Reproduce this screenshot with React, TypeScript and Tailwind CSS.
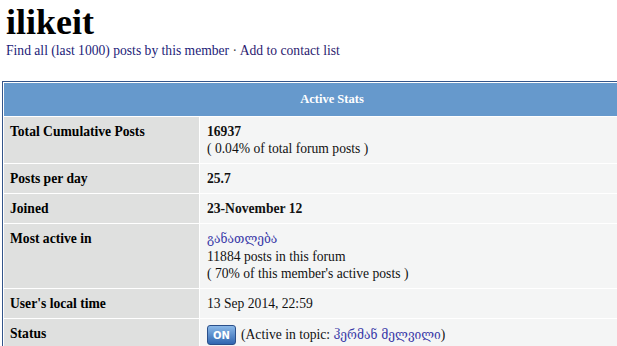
const serif = "font-['Liberation_Serif','DejaVu_Serif','DejaVu_Sans',serif]";
const geo = "text-[12px] font-['DejaVu_Serif','DejaVu_Sans',serif]";

type Row = { label: string; value: React.ReactNode };

const rows: Row[] = [
  {
    label: 'Total Cumulative Posts',
    value: (
      <>
        <div className="font-bold">16937</div>
        <div>( 0.04% of total forum posts )</div>
      </>
    ),
  },
  { label: 'Posts per day', value: <div className="font-bold">25.7</div> },
  { label: 'Joined', value: <div className="font-bold">23-November 12</div> },
  {
    label: 'Most active in',
    value: (
      <>
        <div>
          <a className={`text-[#3a3aa8] ${geo}`} href="#">
            განათლება
          </a>
        </div>
        <div>11884 posts in this forum</div>
        <div>( 70% of this member's active posts )</div>
      </>
    ),
  },
  { label: "User's local time", value: <div>13 Sep 2014, 22:59</div> },
  {
    label: 'Status',
    value: (
      <div className="flex items-center">
        <span className="inline-flex h-[20px] w-[29px] items-center justify-center rounded-[3px] border border-[#2a4f8a] bg-gradient-to-b from-[#8ab8e8] to-[#2f66b0] font-['DejaVu_Sans',sans-serif] text-[10px] font-bold text-white">
          ON
        </span>
        <span className="ml-[5px]">
          (Active in topic:{' '}
          <a className={`text-[#3a3aa8] ${geo}`} href="#">
            ჰერმან მელვილი
          </a>
          )
        </span>
      </div>
    ),
  },
];

export default function App() {
  return (
    <div className={`h-[346px] w-[617px] overflow-hidden bg-white text-[13.6px] leading-[17px] text-[#111] ${serif}`}>
      <h1 className="px-[6px] pt-[2px] text-[36px] font-bold leading-[40px] text-black">ilikeit</h1>
      <div className="px-[6px] text-[#1c1c78]">
        <a href="#">Find all (last 1000) posts by this member</a>
        <span className="text-[#444]"> · </span>
        <a className="text-[#2c1c70]" href="#">
          Add to contact list
        </a>
      </div>

      <table className="ml-[2px] mt-[22px] w-[660px] border-separate border-spacing-[1px] border border-[#34558a] bg-white">
        <thead>
          <tr>
            <th colSpan={2} className="h-[33px] bg-[#6699cc] text-center text-[12.5px] font-bold text-white">
              Active Stats
            </th>
          </tr>
        </thead>
        <tbody>
          {rows.map((r) => (
            <tr key={r.label}>
              <td className="w-[195px] bg-[#dfe0df] px-[6px] py-[6px] align-top font-bold text-black">
                {r.label}
              </td>
              <td className="bg-[#f4f5f5] px-[7px] py-[6px] align-top">{r.value}</td>
            </tr>
          ))}
        </tbody>
      </table>
    </div>
  );
}
